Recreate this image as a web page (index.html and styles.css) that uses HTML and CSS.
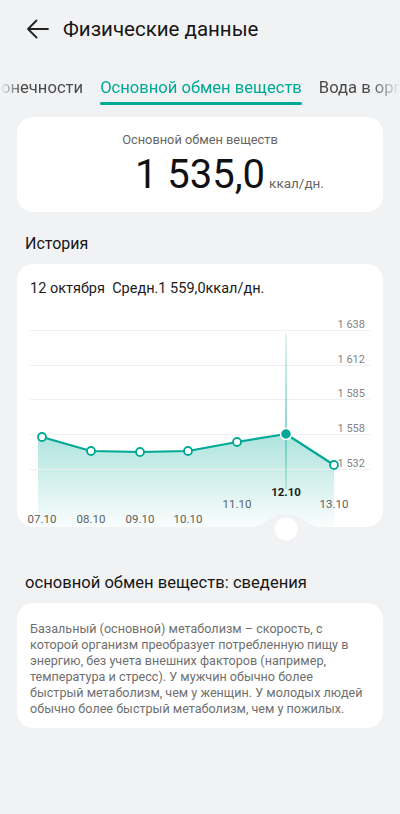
FILE: index.html
```html
<!DOCTYPE html>
<html lang="ru">
    <head>
        <meta charset="UTF-8" />
        <meta name="viewport" content="width=device-width, initial-scale=1.0" />
        <title>Физические данные</title>
        <link rel="stylesheet" href="styles.css">
    </head>
    <body>
        <div id="main">
            <div class="topbar">
                <svg class="back" width="24" height="24" viewBox="0 0 24 24">
                    <path d="M23 12H3M11.5 3.5L3 12l8.5 8.5" fill="none" stroke="#222" stroke-width="1.8" stroke-linecap="round" stroke-linejoin="round"/>
                </svg>
                <span class="title">Физические данные</span>
            </div>

            <div class="tabs">
                <div class="tab">онечности</div>
                <div class="tab active">Основной обмен веществ</div>
                <div class="tab">Вода в организме</div>
            </div>

            <div class="card summary">
                <div class="summary-label">Основной обмен веществ</div>
                <div class="summary-value">
                    <span></span>
                    <span class="number">1 535,0</span>
                    <span class="unit">ккал/дн.</span>
                </div>
            </div>

            <div class="section-title">История</div>

            <div class="chart-wrap">
                <div class="card chart">
                    <div class="chart-head">12 октября&nbsp;&nbsp;Средн.1 559,0ккал/дн.</div>
                    <svg class="plot" width="366" height="229" viewBox="17 297 366 229">
                        <defs>
                            <linearGradient id="fill" x1="0" y1="433" x2="0" y2="526" gradientUnits="userSpaceOnUse">
                                <stop offset="0" stop-color="#00a996" stop-opacity="0.32"/>
                                <stop offset="1" stop-color="#00a996" stop-opacity="0.02"/>
                            </linearGradient>
                            <linearGradient id="cursor" x1="0" y1="333" x2="0" y2="488" gradientUnits="userSpaceOnUse">
                                <stop offset="0" stop-color="#00a996" stop-opacity="0.25"/>
                                <stop offset="0.6" stop-color="#00a996" stop-opacity="0.9"/>
                                <stop offset="1" stop-color="#00a996" stop-opacity="0.35"/>
                            </linearGradient>
                        </defs>

                        <path d="M38 436 L42 436 L91 450 L140 451 L188 450 L237 441 L286 433 L334 464 L334 526 L38 526 Z" fill="url(#fill)"/>

                        <g stroke="#efefef" stroke-width="1">
                            <line x1="30" y1="329.5" x2="370" y2="329.5"/>
                            <line x1="30" y1="364.5" x2="370" y2="364.5"/>
                            <line x1="30" y1="398.5" x2="370" y2="398.5"/>
                            <line x1="30" y1="433.5" x2="370" y2="433.5"/>
                            <line x1="30" y1="468.5" x2="370" y2="468.5"/>
                        </g>

                        <g class="y-labels">
                            <text x="365" y="327">1 638</text>
                            <text x="365" y="362">1 612</text>
                            <text x="365" y="396">1 585</text>
                            <text x="365" y="431">1 558</text>
                            <text x="365" y="466">1 532</text>
                        </g>

                        <line x1="286" y1="333" x2="286" y2="488" stroke="url(#cursor)" stroke-width="1"/>

                        <polyline points="42,436 91,450 140,451 188,450 237,441 286,433 334,464" fill="none" stroke="#00a996" stroke-width="2.2" stroke-linejoin="round"/>

                        <g fill="#fff" stroke="#00a996" stroke-width="1.8">
                            <circle cx="42" cy="436" r="4"/>
                            <circle cx="91" cy="450" r="4"/>
                            <circle cx="140" cy="451" r="4"/>
                            <circle cx="188" cy="450" r="4"/>
                            <circle cx="237" cy="441" r="4"/>
                            <circle cx="334" cy="464" r="4"/>
                        </g>
                        <circle cx="286" cy="433" r="5.5" fill="#00a996" stroke="#fff" stroke-width="1.5"/>

                        <g class="x-labels">
                            <text x="42" y="522">07.10</text>
                            <text x="91" y="522">08.10</text>
                            <text x="140" y="522">09.10</text>
                            <text x="188" y="522">10.10</text>
                            <text x="237" y="507">11.10</text>
                            <text x="286" y="495" class="current">12.10</text>
                            <text x="334" y="507">13.10</text>
                        </g>
                    </svg>
                </div>
                <svg class="handle" width="76" height="28" viewBox="248 512 76 28">
                    <path d="M248 526.5 C265 526.5 269 513 286 513 C303 513 307 526.5 324 526.5 L324 540 L248 540 Z" fill="#f1f2f4"/>
                    <circle cx="286" cy="528" r="11.5" fill="#fff"/>
                </svg>
            </div>

            <div class="section-title info-title">основной обмен веществ: сведения</div>

            <div class="card info">
                Базальный (основной) метаболизм – скорость, с<br>
                которой организм преобразует потребленную пищу в<br>
                энергию, без учета внешних факторов (например,<br>
                температура и стресс). У мужчин обычно более<br>
                быстрый метаболизм, чем у женщин. У молодых людей<br>
                обычно более быстрый метаболизм, чем у пожилых.
            </div>
        </div>
    </body>
</html>
```

FILE: styles.css
```css
html, body {
    margin: 0;
    padding: 0;
}

body {
    background-color: #f1f2f4;
    font-family: Roboto, "Noto Sans", sans-serif;
    color: #1b1b1b;
    width: 400px;
    min-height: 814px;
}

    .topbar {
        height: 58px;
        display: flex;
        align-items: center;
        padding-left: 25px;
    }
    .topbar .back {
        display: block;
        flex: none;
    }
    .topbar .title {
        margin-left: 14px;
        font-size: 20.5px;
        color: #161616;
    }

    .tabs {
        height: 48px;
        box-sizing: border-box;
        padding-top: 19px;
        display: flex;
        gap: 17px;
        white-space: nowrap;
        overflow: hidden;
        -webkit-mask-image: linear-gradient(to right, transparent 0, #000 22px, #000 370px, transparent 400px);
        mask-image: linear-gradient(to right, transparent 0, #000 22px, #000 370px, transparent 400px);
    }
    .tab {
        flex: none;
        font-size: 16.6px;
        line-height: 22px;
        color: #4a4a4a;
    }
    .tab:first-child {
        margin-left: 1px;
    }
    .tab.active {
        color: #00a996;
    }
    .tab.active::after {
        content: "";
        display: block;
        height: 3px;
        margin-top: 3px;
        border-radius: 2px;
        background-color: #00a996;
    }

    .card {
        background-color: #ffffff;
        border-radius: 16px;
        margin: 0 17px;
    }

    .summary {
        margin-top: 11px;
        height: 95px;
        box-sizing: border-box;
        padding-top: 15px;
        text-align: center;
    }
    .summary-label {
        font-size: 12.8px;
        line-height: 16px;
        color: #666;
    }
    .summary-value {
        display: grid;
        grid-template-columns: 1fr auto 1fr;
        align-items: baseline;
        margin-top: 3px;
    }
    .summary-value .number {
        font-size: 40px;
        line-height: 48px;
        color: #111;
    }
    .summary-value .unit {
        text-align: left;
        margin-left: 4px;
        font-size: 13.5px;
        color: #666;
    }

    .section-title {
        padding: 21px 25px 9px;
        font-size: 16px;
        line-height: 22px;
        color: #161616;
    }
    .info-title {
        padding-top: 44px;
        padding-bottom: 8px;
        font-size: 16.6px;
        line-height: 24px;
    }

    .chart-wrap {
        position: relative;
    }
    .chart {
        height: 263px;
        box-sizing: border-box;
        padding-top: 16px;
        overflow: hidden;
    }
    .chart-head {
        padding-left: 13px;
        font-size: 14.5px;
        line-height: 18px;
        color: #1b1b1b;
    }
    .chart .plot {
        display: block;
    }
    .plot text {
        font-family: Roboto, "Noto Sans", sans-serif;
        font-size: 11px;
    }
    .y-labels text {
        fill: #858585;
        text-anchor: end;
    }
    .x-labels text {
        fill: #5f5f5f;
        text-anchor: middle;
        font-size: 11.5px;
    }
    .x-labels text.current {
        fill: #1b1b1b;
        font-weight: bold;
    }

    .handle {
        position: absolute;
        left: 248px;
        top: 249px;
        display: block;
    }

    .info {
        padding: 18px 8px 11px 13px;
        font-size: 12.6px;
        line-height: 16px;
        color: #6f6f6f;
        white-space: nowrap;
    }
```
